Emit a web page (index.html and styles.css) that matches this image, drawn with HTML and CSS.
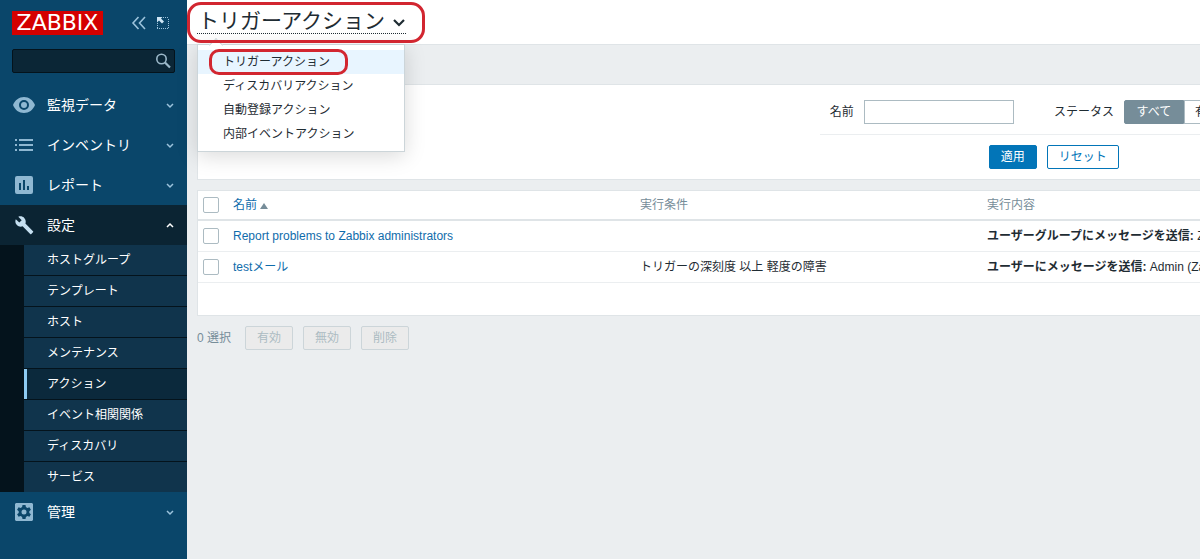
FILE: index.html
```html
<!DOCTYPE html>
<html lang="ja">
<head>
<meta charset="utf-8">
<title>トリガーアクション</title>
<link rel="stylesheet" href="styles.css">
</head>
<body>
<aside class="sidebar">
  <div class="brand">
    <a class="logo" href="#">ZABBIX</a>
    <div class="brand-tools">
      <button class="icon-button" type="button" aria-label="サイドバーを折りたたむ">
        <svg width="16" height="16" viewBox="0 0 16 16"><path d="M7.500 2 2 8l5.500 6M14 2 8.500 8l5.500 6" fill="none" stroke="currentColor" stroke-width="1.600"/></svg>
      </button>
      <button class="icon-button" type="button" aria-label="サイドバーを隠す">
        <svg width="16" height="16" viewBox="0 0 16 16"><path d="M8 2.500h6M13.500 4v10M2.500 8v6M2 13.500h12" fill="none" stroke="currentColor" stroke-dasharray="1 1"/><path d="M2 2h5.500L6 3.500 9 6.500 7 8.500l-3-3L2 7.500z" fill="#cfe6f5"/></svg>
      </button>
    </div>
  </div>
  <form class="search">
    <input class="search-input" type="text" aria-label="検索">
    <button class="search-button" type="button" aria-label="検索を実行">
      <svg width="16" height="16" viewBox="0 0 16 16"><circle cx="6.500" cy="6" r="4.700" fill="none" stroke="currentColor" stroke-width="1.600"/><path d="m10 9.500 5 5" stroke="currentColor" stroke-width="2.200"/></svg>
    </button>
  </form>
  <nav class="menu">
    <a class="menu-item" href="#">
      <svg class="menu-icon" viewBox="0 0 24 24"><path fill-rule="evenodd" d="M12 4C7 4 3 7 1 12c2 5 6 8 11 8s9-3 11-8c-2-5-6-8-11-8zm0 13a5 5 0 1 1 0-10 5 5 0 0 1 0 10zm0-2a3 3 0 1 0 0-6 3 3 0 0 0 0 6z"/></svg>
      <span class="menu-label">監視データ</span>
      <svg class="chevron" viewBox="0 0 8 8"><path d="m1 3 3 3 3-3"/></svg>
    </a>
    <a class="menu-item" href="#">
      <svg class="menu-icon" viewBox="0 0 24 24"><path d="M3 6h2v2H3zM3 11h2v2H3zM3 16h2v2H3zM7 6h14v2H7zM7 11h14v2H7zM7 16h14v2H7z"/></svg>
      <span class="menu-label">インベントリ</span>
      <svg class="chevron" viewBox="0 0 8 8"><path d="m1 3 3 3 3-3"/></svg>
    </a>
    <a class="menu-item" href="#">
      <svg class="menu-icon" viewBox="0 0 24 24"><path fill-rule="evenodd" d="M5 3h14a2 2 0 0 1 2 2v14a2 2 0 0 1-2 2H5a2 2 0 0 1-2-2V5a2 2 0 0 1 2-2zm2 7v7h2v-7zm4-3v10h2V7zm4 6v4h2v-4z"/></svg>
      <span class="menu-label">レポート</span>
      <svg class="chevron" viewBox="0 0 8 8"><path d="m1 3 3 3 3-3"/></svg>
    </a>
    <a class="menu-item menu-item-open" href="#">
      <svg class="menu-icon" viewBox="0 0 24 24"><path d="m21 18.200-7.600-7.600c.8-2 .3-4.200-1.200-5.700C10.600 3.300 8.300 3 6.300 3.800l3.400 3.400-2.400 2.400-3.500-3.400C2.900 8.200 3.300 10.500 4.900 12.100c1.500 1.500 3.800 2 5.700 1.200l7.600 7.600c.3.300.8.300 1.100 0l1.700-1.600c.4-.4.400-.8 0-1.100z"/></svg>
      <span class="menu-label">設定</span>
      <svg class="chevron" viewBox="0 0 8 8"><path d="m1 6 3-3 3 3"/></svg>
    </a>
    <div class="submenu">
      <a class="submenu-item" href="#">ホストグループ</a>
      <a class="submenu-item" href="#">テンプレート</a>
      <a class="submenu-item" href="#">ホスト</a>
      <a class="submenu-item" href="#">メンテナンス</a>
      <a class="submenu-item submenu-item-current" href="#">アクション</a>
      <a class="submenu-item" href="#">イベント相関関係</a>
      <a class="submenu-item" href="#">ディスカバリ</a>
      <a class="submenu-item" href="#">サービス</a>
    </div>
    <a class="menu-item" href="#">
      <svg class="menu-icon" viewBox="0 0 24 24"><path fill-rule="evenodd" d="M4 3h16l1 1v16l-1 1H4l-1-1V4zm6.500 2-.4 2.100-1.500.9-2-.8-1.500 2.600 1.600 1.400v1.700l-1.600 1.300 1.500 2.600 2-.7 1.500.8.4 2.100h3l.4-2.100 1.500-.8 2 .7 1.500-2.600-1.600-1.300v-1.700l1.600-1.400-1.500-2.600-2 .8-1.500-.9-.4-2.100zM12 9.500a2.500 2.500 0 1 1 0 5 2.500 2.500 0 0 1 0-5z"/></svg>
      <span class="menu-label">管理</span>
      <svg class="chevron" viewBox="0 0 8 8"><path d="m1 3 3 3 3-3"/></svg>
    </a>
  </nav>
</aside>
<main class="main">
  <header class="page-header">
    <h1 class="page-title">
      <button class="title-button" type="button" aria-expanded="true">トリガーアクション<svg class="title-chevron" viewBox="0 0 12 12"><path d="m1 3 5 5 5-5"/></svg></button>
    </h1>
    <span class="title-ring"></span>
    <div class="dropdown">
      <a class="dropdown-item dropdown-item-current" href="#">トリガーアクション</a>
      <a class="dropdown-item" href="#">ディスカバリアクション</a>
      <a class="dropdown-item" href="#">自動登録アクション</a>
      <a class="dropdown-item" href="#">内部イベントアクション</a>
    </div>
  </header>
  <div class="content">
    <form class="filter">
      <div class="filter-body">
        <div class="filter-fields">
          <label class="filter-label" for="name">名前</label>
          <input class="filter-input" id="name" type="text">
          <span class="filter-label status-label">ステータス</span>
          <div class="segments">
            <button class="segment segment-on" type="button">すべて</button>
            <button class="segment" type="button">有効</button>
          </div>
        </div>
        <div class="filter-buttons">
          <button class="button button-primary" type="button">適用</button>
          <button class="button" type="button">リセット</button>
        </div>
      </div>
    </form>
    <div class="list">
      <table class="table">
        <thead>
          <tr>
            <th class="col-check"><input class="check" type="checkbox" aria-label="すべて選択"></th>
            <th class="col-name"><a class="link" href="#">名前<span class="sort"></span></a></th>
            <th class="col-cond">実行条件</th>
            <th>実行内容</th>
          </tr>
        </thead>
        <tbody>
          <tr>
            <td><input class="check" type="checkbox" aria-label="Report problems to Zabbix administrators"></td>
            <td><a class="link" href="#">Report problems to Zabbix administrators</a></td>
            <td></td>
            <td><b>ユーザーグループにメッセージを送信:</b> Zabbix administrators</td>
          </tr>
          <tr>
            <td><input class="check" type="checkbox" aria-label="testメール"></td>
            <td><a class="link" href="#">testメール</a></td>
            <td>トリガーの深刻度 以上 軽度の障害</td>
            <td><b>ユーザーにメッセージを送信:</b> Admin (Zabbix Administrator)</td>
          </tr>
        </tbody>
      </table>
    </div>
    <div class="actions">
      <span class="selected-count">0 選択</span>
      <button class="button" type="button" disabled>有効</button>
      <button class="button" type="button" disabled>無効</button>
      <button class="button" type="button" disabled>削除</button>
    </div>
  </div>
</main>
</body>
</html>
```

FILE: styles.css
```css
* {
  box-sizing: border-box;
}

body {
  display: flex;
  min-height: 100vh;
  margin: 0;
  overflow-x: hidden;
  background: #ebeef0;
  color: #1f2c33;
  font: 12px/16px "Liberation Sans", "Noto Sans CJK JP", sans-serif;
}

a {
  color: inherit;
  text-decoration: none;
}

button,
input {
  margin: 0;
  font: inherit;
}

/* Sidebar */

.sidebar {
  flex: 0 0 187px;
  min-width: 0;
  background: #0a466a;
  color: #fff;
}

.brand {
  display: flex;
  align-items: center;
  justify-content: space-between;
  padding: 11px 16px 0 12px;
}

.logo {
  width: 91px;
  background: #d40000;
  font: 22px/24px "DejaVu Sans", sans-serif;
  text-align: center;
}

.brand-tools {
  display: flex;
  gap: 8px;
}

.icon-button {
  display: flex;
  padding: 0;
  border: 0;
  background: none;
  color: #9cc3dc;
}

.search {
  display: flex;
  margin: 14px 12px 12px;
  border: 1px solid #04131c;
  border-radius: 2px;
  background: #0b2636;
}

.search-input {
  flex: 1;
  width: 100%;
  min-width: 0;
  height: 22px;
  border: 0;
  background: none;
  color: #fff;
}

.search-button {
  display: flex;
  align-items: center;
  padding: 0 3px;
  border: 0;
  background: none;
  color: #9cb9ca;
}

.menu-item {
  display: flex;
  align-items: center;
  height: 40px;
  padding: 0 13px 0 12px;
  font-size: 14px;
}

.menu-item-open {
  background: #0b2433;
}

.menu-icon {
  width: 24px;
  height: 24px;
  fill: #8fb8d2;
}

.menu-item-open .menu-icon {
  fill: #c5dff0;
}

.menu-label {
  flex: 1;
  margin-left: 11px;
}

.chevron {
  width: 8px;
  height: 8px;
  fill: none;
  stroke: #9cc3dc;
  stroke-width: 1.5;
}

.menu-item-open .chevron {
  stroke: #fff;
}

.submenu {
  border-left: 24px solid #04131c;
  background: #10344c;
}

.submenu-item {
  display: block;
  padding: 7px 20px 7px 23px;
  border-bottom: 1px solid #04131c;
}

.submenu-item:last-child {
  border-bottom: 0;
}

.submenu-item-current {
  padding-left: 20px;
  background: #0b293c;
  box-shadow: inset 3px 0 #8ecbf2;
  padding-left: 23px;
}

/* Page header */

.main {
  flex: 1;
  min-width: 0;
}

.page-header {
  position: relative;
  height: 45px;
  padding: 8px 10px 0;
  border-bottom: 1px solid #dfe4e7;
  background: #fff;
}

.page-title {
  margin: 0;
  font-size: 21px;
  font-weight: 400;
  line-height: 25px;
}

.title-button {
  display: flex;
  align-items: center;
  gap: 8px;
  padding: 0 1px;
  border: 0;
  border-bottom: 1px dotted #1f2c33;
  background: none;
  color: inherit;
}

.title-chevron {
  width: 12px;
  height: 12px;
  margin-top: 4px;
  fill: none;
  stroke: #1f2c33;
  stroke-width: 2.2;
}

.title-ring {
  position: absolute;
  top: 2px;
  left: 0;
  z-index: 3;
  width: 238px;
  height: 41px;
  border: 3px solid #d22630;
  border-radius: 14px;
}

.dropdown {
  position: absolute;
  top: 44px;
  left: 10px;
  z-index: 2;
  width: 208px;
  padding: 5px 0;
  border: 1px solid #ccd5d9;
  background: #fff;
  box-shadow: 0 4px 20px rgba(0, 0, 0, 0.15);
}

.dropdown::before {
  content: "";
  position: absolute;
  top: -5px;
  left: 13px;
  width: 9px;
  height: 9px;
  border-top: 1px solid #ccd5d9;
  border-left: 1px solid #ccd5d9;
  background: #fff;
  transform: rotate(45deg);
}

.dropdown-item {
  display: block;
  position: relative;
  padding: 4px 25px;
}

.dropdown-item-current {
  background: #e8f5ff;
}

.dropdown-item-current::after {
  content: "";
  position: absolute;
  inset: -1px 56px -1px 11px;
  border: 3px solid #d22630;
  border-radius: 10px;
}

/* Filter */

.content {
  padding: 39px 0 0 10px;
}

.filter {
  padding-left: 62%;
  overflow: hidden;
  border: 1px solid #dfe4e7;
  border-right: 0;
  background: #fff;
}

.filter-body {
  min-width: 468px;
}

.filter-fields {
  display: flex;
  align-items: center;
  padding: 15px 10px 10px;
  border-bottom: 1px solid #ebeef0;
}

.filter-input {
  width: 150px;
  height: 24px;
  margin-left: 10px;
  border: 1px solid #acbbc2;
}

.status-label {
  margin: 0 10px 0 40px;
}

.segments {
  display: flex;
}

.segment {
  height: 24px;
  padding: 0 10px;
  border: 1px solid #acbbc2;
  background: #fff;
  color: #1f2c33;
}

.segment-on {
  width: 60px;
  border-color: #768d99;
  border-radius: 2px 0 0 2px;
  background: #768d99;
  color: #fff;
}

.filter-buttons {
  display: flex;
  justify-content: center;
  gap: 10px;
  padding: 10px 0;
}

.button {
  height: 24px;
  padding: 0 11px;
  border: 1px solid #0275b8;
  border-radius: 2px;
  background: #fff;
  color: #0275b8;
}

.button-primary {
  background: #0275b8;
  color: #fff;
}

.button:disabled {
  border-color: #ccd5d9;
  background: #ebebeb;
  color: #acbbc2;
}

/* Action list */

.list {
  margin-top: 10px;
  padding-bottom: 32px;
  overflow: hidden;
  border: 1px solid #dfe4e7;
  border-right: 0;
  background: #fff;
}

.table {
  width: 100%;
  border-collapse: collapse;
  table-layout: fixed;
}

.table th,
.table td {
  height: 31px;
  padding: 0 5px;
  border-bottom: 1px solid #ebeef0;
  text-align: left;
  white-space: nowrap;
}

.table th {
  height: 29px;
  border-bottom: 2px solid #dfe4e7;
  color: #768d99;
  font-weight: 400;
}

.col-check {
  width: 30px;
}

.col-name {
  width: 407px;
}

.col-cond {
  width: 347px;
}

.link {
  color: #0f6cab;
}

.sort {
  display: inline-block;
  margin-left: 3px;
  border: 4px solid transparent;
  border-top: 0;
  border-bottom: 6px solid #768d99;
}

.check {
  display: block;
  width: 16px;
  height: 16px;
  appearance: none;
  border: 1px solid #acbbc2;
  border-radius: 2px;
  background: #fff;
}

.actions {
  display: flex;
  align-items: center;
  gap: 10px;
  padding-top: 10px;
  color: #768d99;
}

.selected-count {
  margin-right: 4px;
}
```
